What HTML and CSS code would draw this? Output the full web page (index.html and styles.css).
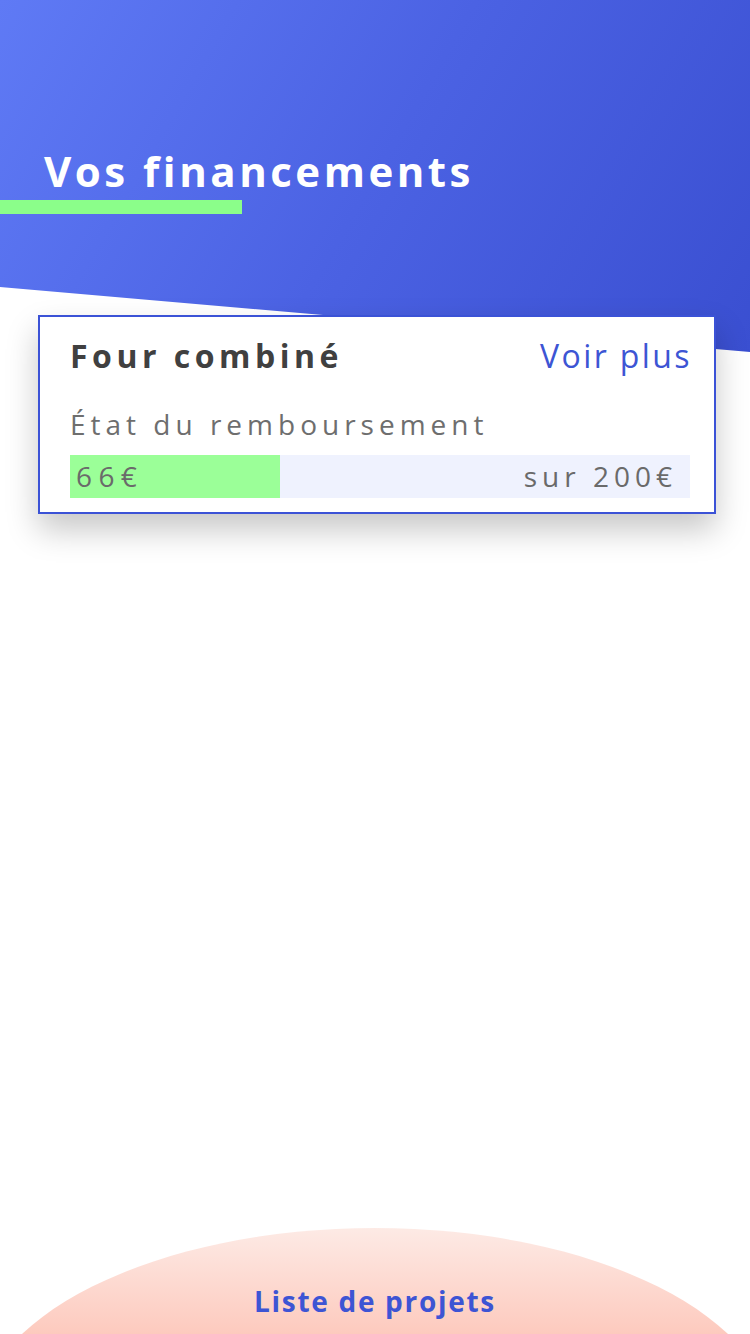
FILE: index.html
```html
<!DOCTYPE html>
<html lang="fr">
<head>
<meta charset="utf-8">
<title>Vos financements</title>
<link rel="stylesheet" href="styles.css">
</head>
<body>
<div class="page">
  <header class="hero">
    <h1 class="hero-title">Vos financements</h1>
    <div class="hero-underline"></div>
  </header>
  <main class="content">
    <section class="card">
      <div class="card-head">
        <h2 class="card-title">Four combiné</h2>
        <a class="card-link" href="#">Voir plus</a>
      </div>
      <p class="card-label">État du remboursement</p>
      <div class="progress">
        <div class="progress-fill" style="width: 33.9%"></div>
        <span class="progress-value">66€</span>
        <span class="progress-total">sur 200€</span>
      </div>
    </section>
  </main>
  <footer class="tabbar">
    <span class="tabbar-label">Liste de projets</span>
  </footer>
</div>
</body>
</html>
```

FILE: styles.css
```css
* { box-sizing: border-box; }

html, body {
  margin: 0;
  padding: 0;
  background: #ffffff;
}

body {
  font-family: "Open Sans", "Liberation Sans", sans-serif;
  overflow: hidden;
}

.page {
  min-height: 1334px;
  display: flex;
  flex-direction: column;
}

.hero {
  height: 352px;
  padding: 146px 0 0 0;
  background: linear-gradient(120deg, #5f7af5 0%, #4b62e3 50%, #3a4fd1 100%);
  clip-path: polygon(0 0, 100% 0, 100% 352px, 0 287px);
}

.hero-title {
  margin: 0 0 0 44px;
  font-size: 42px;
  line-height: 50px;
  font-weight: 700;
  color: #ffffff;
  letter-spacing: 3.5px;
}

.hero-underline {
  margin-top: 4px;
  width: 242px;
  height: 14px;
  background: #8bfe8a;
}

.content {
  flex: 1;
}

.card {
  position: relative;
  margin: -37px 34px 0 38px;
  background: #ffffff;
  border: 2px solid #3b52d6;
  padding: 19px 24px 14px 30px;
  box-shadow: 0 16px 30px rgba(0, 0, 0, 0.22);
}

.card-head {
  display: flex;
  justify-content: space-between;
  align-items: baseline;
}

.card-title {
  margin: 0;
  font-size: 32px;
  line-height: 40px;
  font-weight: 700;
  color: #404040;
  letter-spacing: 4.5px;
}

.card-link {
  margin-right: -2px;
  font-size: 32px;
  line-height: 40px;
  font-weight: 400;
  color: #3d55d4;
  text-decoration: none;
  letter-spacing: 2.4px;
}

.card-label {
  margin: 30px 0 0 0;
  font-size: 28px;
  line-height: 36px;
  color: #6e6e6e;
  letter-spacing: 5px;
}

.progress {
  position: relative;
  margin-top: 13px;
  height: 43px;
  background: #eff2fe;
  display: flex;
  justify-content: space-between;
  align-items: center;
  padding: 0 13px 0 6px;
}

.progress-fill {
  position: absolute;
  left: 0;
  top: 0;
  bottom: 0;
  background: #9bff98;
}

.progress-value,
.progress-total {
  position: relative;
  font-size: 28px;
  line-height: 43px;
  color: #6a6a6a;
}

.progress-value { letter-spacing: 6.4px; }
.progress-total { letter-spacing: 5px; }

.tabbar {
  position: relative;
  height: 106px;
  overflow: hidden;
  text-align: center;
  padding-top: 55px;
}

.tabbar::before {
  content: "";
  position: absolute;
  top: 0;
  left: -25px;
  width: 800px;
  height: 400px;
  border-radius: 50%;
  background: linear-gradient(180deg, #fdeae5 0px, #fdcabe 106px, #fdc3b5 400px);
}

.tabbar-label {
  position: relative;
  font-size: 28px;
  line-height: 36px;
  font-weight: 700;
  color: #3d54d4;
  letter-spacing: 1.7px;
}
```
